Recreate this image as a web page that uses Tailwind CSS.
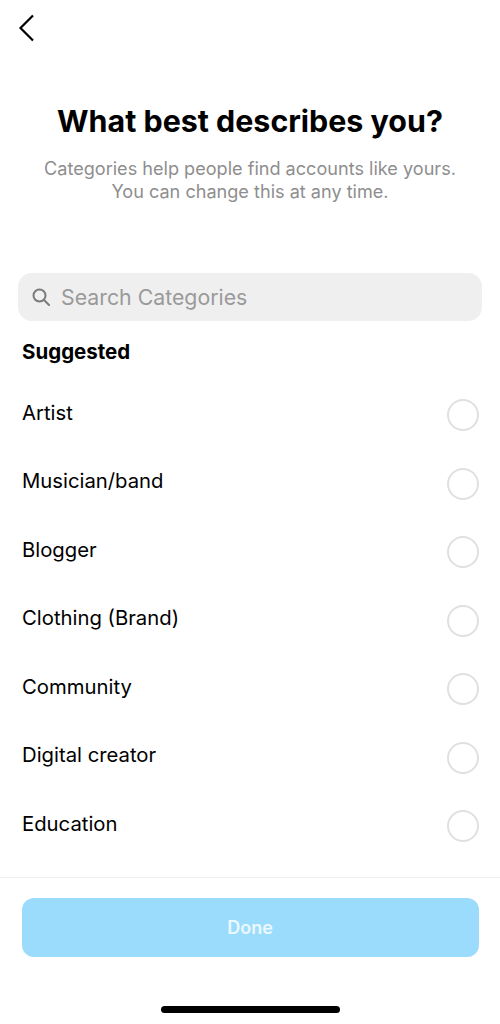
<!DOCTYPE html>
<html lang="en">
<head>
    <meta charset="UTF-8">
    <meta name="viewport" content="width=device-width, initial-scale=1.0">
    <title>What best describes you?</title>
    <script src="https://cdn.jsdelivr.net/npm/@tailwindcss/browser@4"></script>
</head>
<body class="bg-white">
    <div class="w-[500px] h-[1024px] flex flex-col overflow-hidden font-['Inter',sans-serif] text-black">
        <!-- Back -->
        <div class="h-[56px] pl-[18px] pt-[14px]">
            <svg width="18" height="28" viewBox="0 0 18 28" fill="none" stroke="#000" stroke-width="2.2">
                <path d="M15 1.5 L2.5 14 L15 26.5"/>
            </svg>
        </div>

        <h1 class="mt-[44px] text-center text-[30.4px] leading-[42px] font-bold">What best describes you?</h1>
        <p class="mt-[15px] text-center text-[18.1px] leading-[22.5px] text-[#8e8e8e]">Categories help people find accounts like yours.<br>You can change this at any time.</p>

        <!-- Search -->
        <div class="mt-[71px] mx-[18px] h-[48px] rounded-[14px] bg-[#efefef] flex items-center pl-[14px] gap-[11px]">
            <svg width="18" height="18" viewBox="0 0 18 18" fill="none" stroke="#7a7a7a" stroke-width="2">
                <circle cx="7.5" cy="7.5" r="6"/>
                <path d="M12 12 L17 17" stroke-linecap="round"/>
            </svg>
            <span class="text-[21.3px] text-[#9a9a9a] mt-[1px]">Search Categories</span>
        </div>

        <h2 class="mt-[18px] pl-[22px] text-[20.5px] leading-[26px] font-bold">Suggested</h2>

        <!-- Categories -->
        <ul class="mt-[16px] pl-[22px] pr-[21.5px]">
            <li class="h-[68.5px] flex items-center justify-between">
                <span class="text-[20.3px] -mt-[5px]">Artist</span>
                <span class="w-[32px] h-[32px] rounded-full border-2 border-[#e0e0e0]"></span>
            </li>
            <li class="h-[68.5px] flex items-center justify-between">
                <span class="text-[20.3px] -mt-[5px]">Musician/band</span>
                <span class="w-[32px] h-[32px] rounded-full border-2 border-[#e0e0e0]"></span>
            </li>
            <li class="h-[68.5px] flex items-center justify-between">
                <span class="text-[20.3px] -mt-[5px]">Blogger</span>
                <span class="w-[32px] h-[32px] rounded-full border-2 border-[#e0e0e0]"></span>
            </li>
            <li class="h-[68.5px] flex items-center justify-between">
                <span class="text-[20.3px] -mt-[5px]">Clothing (Brand)</span>
                <span class="w-[32px] h-[32px] rounded-full border-2 border-[#e0e0e0]"></span>
            </li>
            <li class="h-[68.5px] flex items-center justify-between">
                <span class="text-[20.3px] -mt-[5px]">Community</span>
                <span class="w-[32px] h-[32px] rounded-full border-2 border-[#e0e0e0]"></span>
            </li>
            <li class="h-[68.5px] flex items-center justify-between">
                <span class="text-[20.3px] -mt-[5px]">Digital creator</span>
                <span class="w-[32px] h-[32px] rounded-full border-2 border-[#e0e0e0]"></span>
            </li>
            <li class="h-[68.5px] flex items-center justify-between">
                <span class="text-[20.3px] -mt-[5px]">Education</span>
                <span class="w-[32px] h-[32px] rounded-full border-2 border-[#e0e0e0]"></span>
            </li>
        </ul>

        <!-- Footer -->
        <div class="mt-auto border-t border-[#efefef] pt-[20px] h-[147px] flex flex-col items-center">
            <button class="w-[457px] h-[59px] rounded-[12px] bg-[#9bdcfd] text-white/80 font-semibold text-[18px]">Done</button>
            <div class="mt-[49px] w-[179px] h-[7px] rounded-full bg-black"></div>
        </div>
    </div>
</body>
</html>
